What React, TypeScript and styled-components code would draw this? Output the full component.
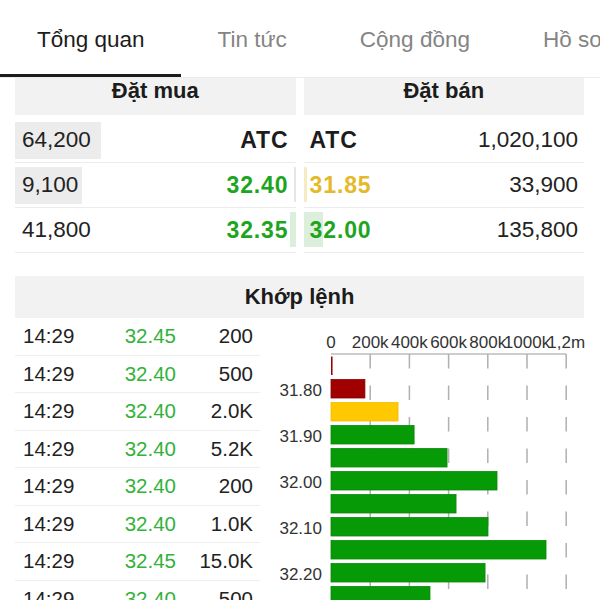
import React from 'react';
import styled, { createGlobalStyle } from 'styled-components';

const GlobalStyle = createGlobalStyle`
  html, body {
    margin: 0;
    padding: 0;
    background: #fff;
  }
  body {
    font-family: 'Liberation Sans', Arial, sans-serif;
    color: #222;
    overflow: hidden;
  }
`;

const GREEN = '#1ea51e';
const TRADE_GREEN = '#33b23a';
const YELLOW = '#e4b92a';

const Page = styled.div`
  width: 600px;
  height: 600px;
  overflow: hidden;
`;

const TabBar = styled.div`
  display: flex;
  height: 78px;
  box-sizing: border-box;
  border-bottom: 1px solid #ececec;
  overflow: hidden;
`;

const Tab = styled.div<{ $active?: boolean }>`
  flex-shrink: 0;
  box-sizing: border-box;
  height: 77px;
  padding: 6px 36px 0 37px;
  display: flex;
  align-items: center;
  white-space: nowrap;
  font-size: 22.5px;
  color: ${(p) => (p.$active ? '#1c1c1c' : '#848484')};
  border-bottom: 3px solid ${(p) => (p.$active ? '#1c1c1c' : 'transparent')};
`;

const OrderBook = styled.div`
  display: grid;
  grid-template-columns: 1fr 1fr;
  column-gap: 8px;
  padding: 0 16px 0 15px;
`;

const SectionHead = styled.div<{ $h: number; $size: number; $top?: boolean }>`
  height: ${(p) => p.$h}px;
  box-sizing: border-box;
  background: #f2f2f2;
  display: flex;
  align-items: ${(p) => (p.$top ? 'flex-start' : 'center')};
  justify-content: center;
  font-weight: 700;
  font-size: ${(p) => p.$size}px;
  color: #1c1c1c;
`;

const BookRows = styled.div`
  margin-top: 3px;
`;

const BookRow = styled.div<{ $side: 'bid' | 'ask' }>`
  position: relative;
  height: 45px;
  box-sizing: border-box;
  border-bottom: 1px solid #ececec;
  display: flex;
  align-items: center;
  justify-content: space-between;
  padding: ${(p) => (p.$side === 'bid' ? '0 7px 0 7px' : '0 6px 0 6px')};
`;

const VolShade = styled.div`
  position: absolute;
  top: 4px;
  bottom: 3px;
  left: 0;
  background: #ececec;
`;

const PriceShade = styled.div<{ $side: 'bid' | 'ask'; $color: string }>`
  position: absolute;
  top: 4px;
  bottom: 5px;
  ${(p) => (p.$side === 'bid' ? 'right: 0;' : 'left: 0;')}
  background: ${(p) => p.$color};
`;

const Vol = styled.span`
  position: relative;
  font-size: 22.5px;
  color: #222;
`;

const Price = styled.span<{ $color: string }>`
  position: relative;
  font-size: 23px;
  font-weight: 700;
  letter-spacing: 0.9px;
  color: ${(p) => p.$color};
`;

const MatchHead = styled.div`
  margin: 23px 16px 0 15px;
`;

const MatchBody = styled.div`
  display: flex;
  padding-left: 15px;
`;

const TradeList = styled.div`
  width: 245px;
  flex-shrink: 0;
`;

const TradeRow = styled.div`
  display: grid;
  grid-template-columns: 1fr 80px 77px;
  align-items: center;
  height: 37.5px;
  box-sizing: border-box;
  border-bottom: 1px solid #eeeeee;
  padding: 0 7px 0 8px;
  font-size: 20.5px;
`;

const Cell = styled.span<{ $color?: string; $right?: boolean }>`
  color: ${(p) => p.$color || '#222'};
  text-align: ${(p) => (p.$right ? 'right' : 'left')};
`;

const ChartBox = styled.div`
  flex: 1;
  height: 282px;
`;

type BookLine = {
  vol: string;
  price: string;
  color: string;
  volShade?: number;
  shade?: { w: number; color: string };
};

const bids: BookLine[] = [
  { vol: '64,200', price: 'ATC', color: '#1c1c1c', volShade: 86 },
  { vol: '9,100', price: '32.40', color: GREEN, volShade: 67, shade: { w: 1.5, color: '#e6e6e6' } },
  { vol: '41,800', price: '32.35', color: GREEN, shade: { w: 6, color: '#dcefdc' } },
];

const asks: BookLine[] = [
  { vol: '1,020,100', price: 'ATC', color: '#1c1c1c' },
  { vol: '33,900', price: '31.85', color: YELLOW, shade: { w: 3, color: '#f6ebc2' } },
  { vol: '135,800', price: '32.00', color: GREEN, shade: { w: 19, color: '#dcefdc' } },
];

const trades = [
  ['14:29', '32.45', '200'],
  ['14:29', '32.40', '500'],
  ['14:29', '32.40', '2.0K'],
  ['14:29', '32.40', '5.2K'],
  ['14:29', '32.40', '200'],
  ['14:29', '32.40', '1.0K'],
  ['14:29', '32.45', '15.0K'],
  ['14:29', '32.40', '500'],
];

const volumes = [8, 173, 342, 424, 592, 847, 638, 801, 1097, 786, 505];
const axisLabels = ['0', '200k', '400k', '600k', '800k', '1000k', '1,2m'];
const X0 = 71;
const STEP = 39.2;

const barColor = (i: number) => (i < 2 ? '#a00000' : i === 2 ? '#ffc800' : '#079a07');
const barStroke = (i: number) => (i < 2 ? '#8a0000' : i === 2 ? '#f0bc00' : '#0a880a');

const VolumeChart = () => (
  <svg width="340" height="282" viewBox="0 0 340 282">
    <g fontFamily="'Liberation Sans', Arial, sans-serif" fontSize="17" fill="#333">
      {axisLabels.map((l, i) => (
        <text key={l} x={X0 + i * STEP} y={30} textAnchor="middle">
          {l}
        </text>
      ))}
    </g>
    <line x1={X0} y1={36} x2={X0 + 6 * STEP} y2={36} stroke="#bdbdbd" strokeWidth="1.5" />
    {[1, 2, 3, 4, 5, 6].map((i) => (
      <line
        key={i}
        x1={X0 + i * STEP}
        y1={36}
        x2={X0 + i * STEP}
        y2={282}
        stroke="#b0b0b0"
        strokeWidth="1.5"
        strokeDasharray="14.5 17"
      />
    ))}
    {volumes.map((v, i) => {
      const w = Math.max(1.2, (v / 200) * STEP);
      return (
        <rect
          key={i}
          x={X0}
          y={38.5 + i * 23}
          width={w}
          height={18.5}
          fill={barColor(i)}
          stroke={i === 0 ? 'none' : barStroke(i)}
          strokeWidth="0.8"
        />
      );
    })}
    <g fontFamily="'Liberation Sans', Arial, sans-serif" fontSize="17" fill="#333" textAnchor="end">
      {['31.80', '31.90', '32.00', '32.10', '32.20'].map((l, k) => (
        <text key={l} x={62} y={72 + k * 46 + 6}>
          {l}
        </text>
      ))}
    </g>
  </svg>
);

const BookSide = ({ title, side, lines }: { title: string; side: 'bid' | 'ask'; lines: BookLine[] }) => (
  <div>
    <SectionHead $h={37} $size={22} $top>
      {title}
    </SectionHead>
    <BookRows>
      {lines.map((l, i) => (
        <BookRow key={i} $side={side}>
          {l.volShade && <VolShade style={{ width: l.volShade }} />}
          {l.shade && <PriceShade $side={side} $color={l.shade.color} style={{ width: l.shade.w }} />}
          {side === 'bid' ? (
            <>
              <Vol>{l.vol}</Vol>
              <Price $color={l.color}>{l.price}</Price>
            </>
          ) : (
            <>
              <Price $color={l.color}>{l.price}</Price>
              <Vol>{l.vol}</Vol>
            </>
          )}
        </BookRow>
      ))}
    </BookRows>
  </div>
);

export default function App() {
  return (
    <Page>
      <GlobalStyle />
      <TabBar>
        <Tab $active>Tổng quan</Tab>
        <Tab>Tin tức</Tab>
        <Tab>Cộng đồng</Tab>
        <Tab>Hồ sơ</Tab>
      </TabBar>
      <OrderBook>
        <BookSide title="Đặt mua" side="bid" lines={bids} />
        <BookSide title="Đặt bán" side="ask" lines={asks} />
      </OrderBook>
      <MatchHead>
        <SectionHead $h={42} $size={22}>
          Khớp lệnh
        </SectionHead>
      </MatchHead>
      <MatchBody>
        <TradeList>
          {trades.map((t, i) => (
            <TradeRow key={i}>
              <Cell>{t[0]}</Cell>
              <Cell $color={TRADE_GREEN} $right>
                {t[1]}
              </Cell>
              <Cell $right>{t[2]}</Cell>
            </TradeRow>
          ))}
        </TradeList>
        <ChartBox>
          <VolumeChart />
        </ChartBox>
      </MatchBody>
    </Page>
  );
}
